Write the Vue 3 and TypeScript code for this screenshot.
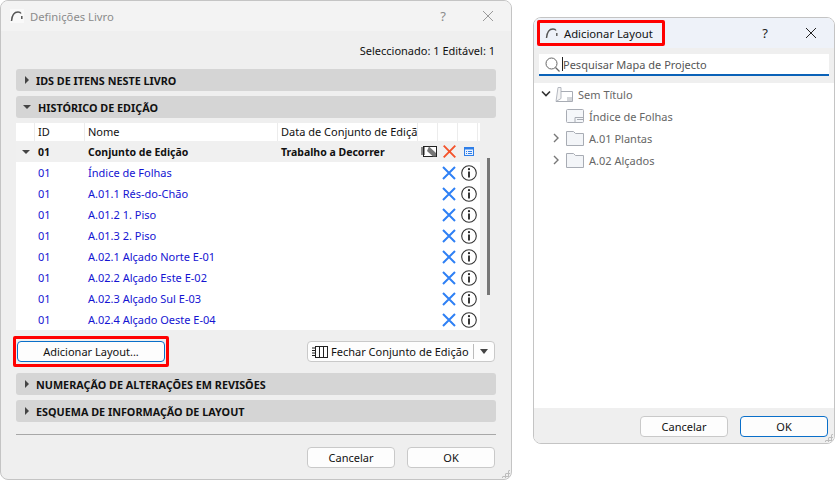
<script setup lang="ts">
const rows: string[] = [
  'Índice de Folhas',
  'A.01.1 Rés-do-Chão',
  'A.01.2 1. Piso',
  'A.01.3 2. Piso',
  'A.02.1 Alçado Norte E-01',
  'A.02.2 Alçado Este E-02',
  'A.02.3 Alçado Sul E-03',
  'A.02.4 Alçado Oeste E-04',
]
const folders: string[] = ['A.01 Plantas', 'A.02 Alçados']
</script>

<template>
  <div class="page">
    <section class="win left">
      <header class="title">
        <svg class="logo" width="14" height="14" viewBox="0 0 14 14"><rect width="14" height="14" fill="#f9f9f9"/><path d="M1.500 12 C2 6 4.500 3 8 3 C9.500 3 10.500 3.500 11 4.500" fill="none" stroke="#555" stroke-width="1.500"/><path d="M11.800 7v3" stroke="#555" stroke-width="1.500"/></svg>
        <span class="title-text dim">Definições Livro</span>
        <span class="help dim">?</span>
        <svg class="close" width="12" height="12" viewBox="0 0 12 12"><path d="M1 1l10 10M11 1L1 11" stroke="#999" stroke-width="1"/></svg>
      </header>
      <div class="body">
        <div class="selected">Seleccionado: 1 Editável: 1</div>
        <div class="bar"><i class="tri-r"></i>IDS DE ITENS NESTE LIVRO</div>
        <div class="bar second"><i class="tri-d"></i>HISTÓRICO DE EDIÇÃO</div>
        <div class="table">
          <div class="row head">
            <span class="c"></span><span class="c">ID</span><span class="c">Nome</span><span class="c clip">Data de Conjunto de Edição</span><span class="c"></span><span class="c"></span><span class="c"></span>
          </div>
          <div class="row group">
            <span class="c tog"><i class="tri-d"></i></span><span class="c">01</span><span class="c">Conjunto de Edição</span><span class="c">Trabalho a Decorrer</span>
            <span class="c ic">
              <svg width="16" height="11" viewBox="0 0 16 11"><rect x="2.500" y=".5" width="13" height="10" fill="#fff" stroke="#222"/><path d="M0 2h4M0 4h4M0 6h4M0 8h4" stroke="#222"/><path d="M8 .5l7 6.500v3.500h-3L6 5z" fill="#777"/></svg>
            </span>
            <span class="c ic"><svg width="13" height="13" viewBox="0 0 13 13"><path d="M.7 .7l11.600 11.600M12.300 .7L.7 12.300" stroke="#f4532b" stroke-width="1.900"/></svg></span>
            <span class="c ic"><svg width="10" height="9" viewBox="0 0 10 9"><rect x=".5" y=".5" width="9" height="8" fill="#eaf2ff" stroke="#2f7fe8"/><path d="M.5 1.500h9" stroke="#2f7fe8" stroke-width="2"/><path d="M2 4.500h1M4 4.500h4M2 6.500h1M4 6.500h4" stroke="#2f7fe8"/></svg></span>
          </div>
          <div v-for="r in rows" :key="r" class="row item">
            <span class="c"></span><span class="c">01</span><span class="c">{{ r }}</span><span class="c"></span><span class="c"></span>
            <span class="c ic"><svg width="14" height="14" viewBox="0 0 14 14"><path d="M1 1l12 12M13 1L1 13" stroke="#2f80f5" stroke-width="2"/></svg></span>
            <span class="c ic"><svg width="16" height="16" viewBox="0 0 16 16"><circle cx="8" cy="8" r="7.300" fill="#fff" stroke="#333" stroke-width="1.100"/><path d="M8 6.500v6" stroke="#222" stroke-width="1.800"/><circle cx="8" cy="4.200" r="1.100" fill="#222"/></svg></span>
          </div>
          <div class="scroll"></div>
        </div>
        <div class="actions">
          <div class="hl"><button class="btn add">Adicionar Layout...</button></div>
          <div class="btn split">
            <svg width="16" height="12" viewBox="0 0 16 12"><rect x="3.500" y=".5" width="12" height="11" fill="none" stroke="#222"/><path d="M7.500 .5v11M11.500 .5v11" stroke="#222"/><path d="M0 2h3M0 4.500h3M0 7h3M0 9.500h3" stroke="#222"/></svg>
            <span>Fechar Conjunto de Edição</span>
            <i class="sep"></i>
            <i class="tri-d drop"></i>
          </div>
        </div>
        <div class="bar"><i class="tri-r"></i>NUMERAÇÃO DE ALTERAÇÕES EM REVISÕES</div>
        <div class="bar second"><i class="tri-r"></i>ESQUEMA DE INFORMAÇÃO DE LAYOUT</div>
        <hr class="rule" />
        <div class="foot">
          <button class="btn wide">Cancelar</button>
          <button class="btn wide">OK</button>
        </div>
      </div>
      <div class="grip"></div>
    </section>

    <section class="win right">
      <header class="title tint">
        <div class="hl title-hl">
          <svg class="logo" width="14" height="14" viewBox="0 0 14 14"><path d="M1.500 12 C2 6 4.500 3 8 3 C9.500 3 10.500 3.500 11 4.500" fill="none" stroke="#555" stroke-width="1.400"/><path d="M11.800 7v3" stroke="#555" stroke-width="1.400"/></svg>
          <span class="title-text">Adicionar Layout</span>
        </div>
        <span class="help">?</span>
        <svg class="close" width="12" height="12" viewBox="0 0 12 12"><path d="M1 1l10 10M11 1L1 11" stroke="#222" stroke-width="1"/></svg>
      </header>
      <div class="search-wrap">
        <div class="search">
          <svg width="15" height="15" viewBox="0 0 15 15"><circle cx="6.500" cy="6.500" r="5.500" fill="none" stroke="#666"/><path d="M10.500 10.500l4 4" stroke="#666" stroke-width="1.200"/></svg>
          <i class="caret"></i>
          <span>Pesquisar Mapa de Projecto</span>
        </div>
      </div>
      <div class="tree">
        <div class="node root">
          <svg class="chev" width="10" height="8" viewBox="0 0 10 8"><path d="M1 1.500l4 4 4-4" fill="none" stroke="#333" stroke-width="1.600"/></svg>
          <svg width="18" height="15" viewBox="0 0 18 15"><path d="M3 .5h3v11l-5 3z" fill="#f4f4f4" stroke="#b4b8c0"/><path d="M6 4.500h11.500v10H1" fill="none" stroke="#a8acb4"/><path d="M12 11h5.500M12 13h5.500" stroke="#a8acb4"/></svg>
          <span>Sem Título</span>
        </div>
        <div class="node sheet">
          <svg width="18" height="14" viewBox="0 0 18 14"><rect x=".5" y=".5" width="17" height="13" rx="1" fill="#f5f7fa" stroke="#a8acb4"/><path d="M9 13.500V8.500h8.500M11 10.500h6" fill="none" stroke="#a8acb4"/></svg>
          <span>Índice de Folhas</span>
        </div>
        <div v-for="f in folders" :key="f" class="node folder">
          <svg class="chev" width="6" height="10" viewBox="0 0 6 10"><path d="M1 1l4 4-4 4" fill="none" stroke="#777" stroke-width="1.400"/></svg>
          <svg width="18" height="15" viewBox="0 0 18 15"><path d="M.5 14.500V.5h7l2 2h8v12z" fill="#f3f5f8" stroke="#a8acb4"/></svg>
          <span>{{ f }}</span>
        </div>
      </div>
      <div class="r-foot">
        <button class="btn wide">Cancelar</button>
        <button class="btn wide primary">OK</button>
      </div>
      <div class="grip"></div>
    </section>
  </div>
</template>

<style>
html, body { margin: 0; background: #fff; }
</style>

<style scoped>
.page {
  width: 835px;
  height: 480px;
  display: flex;
  align-items: flex-start;
  overflow: hidden;
  font-family: "Noto Sans", sans-serif;
  font-size: 11px;
  color: #111;
}
.win {
  position: relative;
  box-sizing: border-box;
  display: flex;
  flex-direction: column;
  border: 1px solid #c4c4c4;
  border-radius: 8px;
  overflow: hidden;
}
.left { width: 512px; height: 480px; background: #efefef; }
.right { width: 302px; height: 427px; margin: 17px 0 0 21px; background: #fff; }
.title {
  height: 30px;
  flex: none;
  display: flex;
  align-items: center;
  padding: 0 17px 0 9px;
  background: #f3f3f3;
}
.tint { background: #eef2f9; padding-left: 0; }
.title-text { font-size: 11.250px; margin-left: 6px; }
.logo { flex: none; }
.dim { color: #8b8b8b; }
.help { margin-left: auto; margin-right: 36px; font-size: 13px; }
.body { flex: 1; padding: 0 15px; }
.selected { height: 38px; display: flex; align-items: center; justify-content: flex-end; padding: 1px 1px 0 0; box-sizing: border-box; }
.bar {
  height: 22px;
  width: 480px;
  background: #d5d5d5;
  border-radius: 3px;
  display: flex;
  align-items: center;
  font-weight: 700;
  font-size: 10.800px;
}
.second { margin-top: 5px; }
.bar i { margin: 0 7px 0 9px; }
.tri-r { width: 0; height: 0; border-left: 4px solid #444; border-top: 4px solid transparent; border-bottom: 4px solid transparent; }
.tri-d { width: 0; height: 0; border-top: 4px solid #444; border-left: 4px solid transparent; border-right: 4px solid transparent; }
.bar .tri-d { margin: 0 7px 0 7px; }
.table { position: relative; margin-top: 5px; width: 464px; height: 207px; background: #fff; overflow: visible; }
.row { display: grid; grid-template-columns: 19px 50px 193px 140px 20px 20px 20px 2px; height: 21px; align-items: center; }
.head { height: 18px; }
.head .c { height: 18px; border-right: 1px solid #ececec; box-sizing: border-box; padding-left: 3px; line-height: 18px; }
.clip { overflow: hidden; white-space: nowrap; }
.group { background: #f0f0f0; font-weight: 700; font-size: 10.500px; }
.item { color: #1414d2; }
.c { display: block; padding-left: 3px; white-space: nowrap; }
.ic { display: flex; align-items: center; justify-content: center; padding: 0 0 0 2px; }
.tog { display: flex; justify-content: center; padding: 0; }
.scroll { position: absolute; left: 471px; top: 35px; width: 3px; height: 137px; background: #777; }
.actions { display: flex; justify-content: space-between; align-items: center; height: 43px; width: 480px; }
.hl { border: 3px solid #f00; border-radius: 2px; padding: 2px 1px; margin-left: -3px; }
.btn {
  box-sizing: border-box;
  height: 21px;
  background: #fdfdfd;
  border: 1px solid #c9c9c9;
  border-radius: 4px;
  font: inherit;
  color: #111;
  padding: 0;
  display: block;
}
.add { width: 148px; border-color: #0a6fc9; }
.split { width: 188px; display: flex; align-items: center; padding-left: 4px; margin-right: 1px; }
.split span { margin-left: 3px; white-space: nowrap; }
.sep { width: 1px; height: 15px; background: #bbb; margin-left: 4px; }
.drop { margin-left: 6px; border-top-width: 5px; border-left-width: 4px; border-right-width: 4px; }
.rule { border: 0; border-top: 1px solid #a8a8a8; margin: 12px 0 0; width: 480px; }
.foot { display: flex; justify-content: flex-end; gap: 12px; width: 479px; margin-top: 12px; }
.wide { width: 88px; text-align: center; }
.primary { border-color: #0a6fc9; }
.grip {
  position: absolute; right: 1px; bottom: 1px; width: 9px; height: 9px;
  background-image: radial-gradient(#bdbdbd 1px, transparent 1.200px);
  background-size: 3px 3px;
  clip-path: polygon(100% 0, 100% 100%, 0 100%);
}
.title-hl {
  display: flex; align-items: center; width: 117px; height: 20px; padding: 0 0 0 5px;
  margin-left: 3px; background: #eef2f9; flex: none;
}
.title-hl .title-text { margin-left: 5px; white-space: nowrap; }
.right .help { color: #222; margin-right: 37px; margin-left: auto; }
.right .title { padding-right: 17px; }
.search-wrap { height: 35px; flex: none; background: #efefef; display: flex; padding: 6px 0 0 5px; box-sizing: border-box; }
.search {
  width: 290px; height: 22px; box-sizing: border-box; background: #fff; border-bottom: 2px solid #0a62b8;
  display: flex; align-items: center; padding-left: 6px; color: #555;
}
.caret { width: 1px; height: 14px; background: #222; margin: 0 0 0 2px; }
.tree { flex: 1; padding-top: 0; color: #666; }
.node { height: 22px; display: flex; align-items: center; position: relative; }
.node span { margin-left: 5px; }
.root { padding-left: 7px; }
.root svg + svg { margin-left: 4px; }
.sheet { padding-left: 32px; }
.folder { padding-left: 19px; }
.folder svg + svg { margin-left: 7px; }
.r-foot {
  height: 35px; flex: none; background: #efefef; display: flex; justify-content: flex-end; gap: 12px; padding: 8px 6px 0 0; box-sizing: border-box;
}
</style>
